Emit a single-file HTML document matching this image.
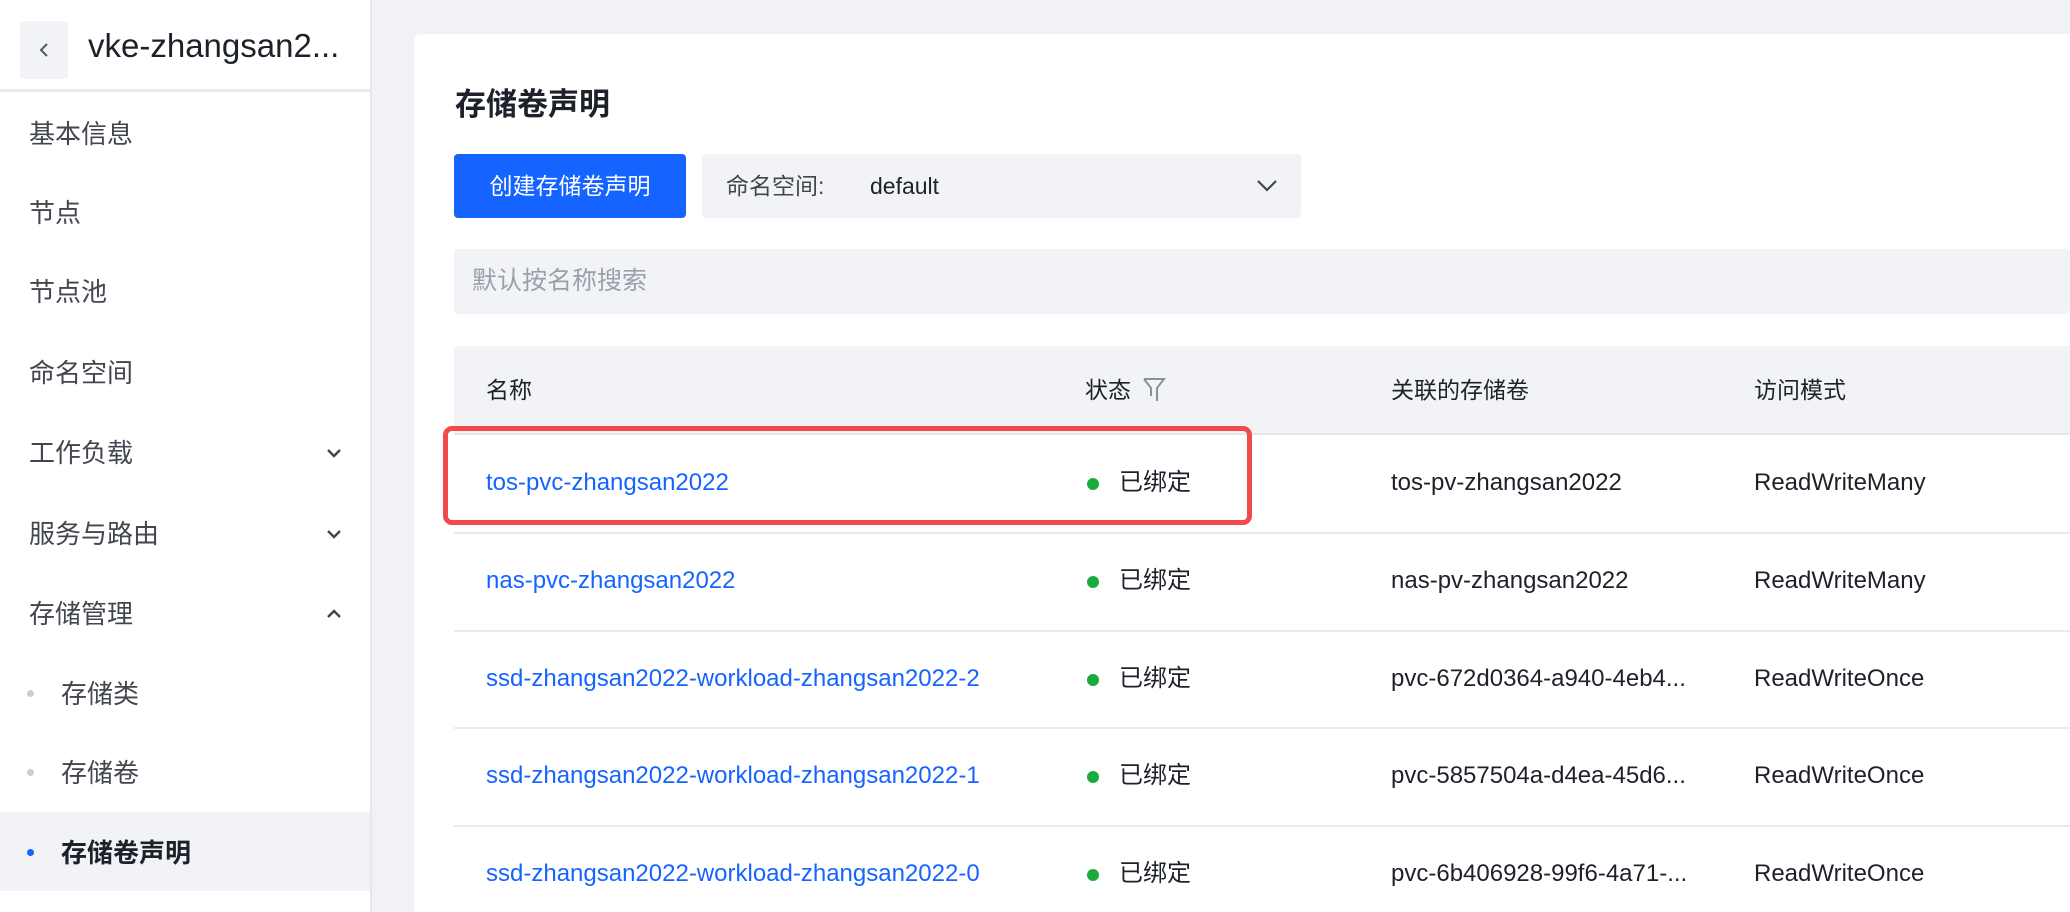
<!DOCTYPE html>
<html><head><meta charset="utf-8"><style>
*{margin:0;padding:0;box-sizing:border-box}
html,body{width:2070px;height:912px;overflow:hidden}
body{background:#f1f2f5;font-family:"Liberation Sans","Noto Sans CJK SC",sans-serif;color:#1d2129;position:relative}
.side{position:absolute;left:0;top:0;width:372px;height:912px;background:#fff;border-right:2px solid #e5e7eb}
.back{position:absolute;left:20px;top:21px;width:48px;height:58px;background:#f2f3f7;border-radius:4px}
.title{position:absolute;left:88px;top:27px;font-size:33px;color:#1d2129}
.div{position:absolute;left:0;top:89px;width:370px;height:3px;background:#e8eaef}
.mi{position:absolute;left:29px;font-size:26px;color:#42464e;line-height:30px}
.chev{position:absolute;left:326px}
.sub{left:61px}
.dot{position:absolute;left:27px;width:7px;height:7px;border-radius:50%;background:#c9cdd4}
.act{position:absolute;left:0;top:812px;width:370px;height:79px;background:#f2f3f7}
.card{position:absolute;left:414px;top:34px;width:1656px;height:878px;background:#fff;border-radius:6px 0 0 0}
.h1{position:absolute;left:455px;top:79px;font-size:31px;font-weight:bold;color:#1d2129}
.btn{position:absolute;left:454px;top:154px;width:232px;height:64px;background:#1664ff;border-radius:4px;color:#fff;font-size:23px;text-align:center;line-height:64px}
.sel{position:absolute;left:702px;top:154px;width:599px;height:64px;background:#f2f3f7;border-radius:4px}
.search{position:absolute;left:454px;top:249px;width:1616px;height:65px;background:#f2f3f7;border-radius:4px;font-size:25px;color:#9aa0aa;line-height:65px;padding-left:18px}
.th{position:absolute;left:454px;top:346px;width:1616px;height:89px;background:#f2f3f7;border-radius:4px 0 0 0;border-bottom:2px solid #e5e7eb}
.t{position:absolute;font-size:23px;line-height:28px}
.r{font-size:24px}
.row{position:absolute;left:454px;width:1616px;height:2px;background:#e8eaef}
.g{position:absolute;width:12px;height:12px;border-radius:50%;background:#1aab3c}
.lnk{color:#1664ff}
</style></head><body>
<div class="side">
<div class="back"><svg width="48" height="58"><path d="M27 23 L21 29 L27 35" stroke="#4e5969" stroke-width="2" fill="none"/></svg></div>
<div class="title">vke-zhangsan2...</div>
<div class="div"></div>
<div class="mi" style="top:119px">基本信息</div>
<div class="mi" style="top:198px">节点</div>
<div class="mi" style="top:277px">节点池</div>
<div class="mi" style="top:358px">命名空间</div>
<div class="mi" style="top:438px">工作负载</div>
<div class="mi" style="top:519px">服务与路由</div>
<div class="mi" style="top:599px">存储管理</div>
<svg class="chev" style="top:448px" width="16" height="10"><path d="M2 2 L8 8 L14 2" stroke="#42464e" stroke-width="2.4" fill="none"/></svg>
<svg class="chev" style="top:529px" width="16" height="10"><path d="M2 2 L8 8 L14 2" stroke="#42464e" stroke-width="2.4" fill="none"/></svg>
<svg class="chev" style="top:609px" width="16" height="10"><path d="M2 8 L8 2 L14 8" stroke="#42464e" stroke-width="2.4" fill="none"/></svg>
<div class="act"></div>
<div class="dot" style="top:690px"></div>
<div class="mi sub" style="top:679px">存储类</div>
<div class="dot" style="top:769px"></div>
<div class="mi sub" style="top:758px">存储卷</div>
<div class="dot" style="top:849px;background:#1664ff"></div>
<div class="mi sub" style="top:838px;font-weight:bold;color:#1d2129">存储卷声明</div>
</div>
<div class="card"></div>
<div class="h1">存储卷声明</div>
<div class="btn">创建存储卷声明</div>
<div class="sel">
<span class="t" style="left:24px;top:18px;color:#42464e">命名空间:</span>
<span class="t" style="left:168px;top:18px">default</span>
<svg style="position:absolute;left:554px;top:25px" width="22" height="14"><path d="M2 2 L11 11 L20 2" stroke="#42464e" stroke-width="2.2" fill="none"/></svg>
</div>
<div class="search">默认按名称搜索</div>
<div class="th"></div>
<div class="t" style="left:486px;top:376px">名称</div>
<div class="t" style="left:1085px;top:376px">状态</div>
<svg style="position:absolute;left:1142px;top:376px" width="24" height="28"><path d="M2 3 H22 L15 12 V25 M2 3 L9 12 V20" stroke="#8a919c" stroke-width="2" fill="none"/></svg>
<div class="t" style="left:1391px;top:376px">关联的存储卷</div>
<div class="t" style="left:1754px;top:376px">访问模式</div>

<div class="t r lnk" style="left:486px;top:469px">tos-pvc-zhangsan2022</div>
<div class="g" style="left:1087px;top:478px"></div><div class="t r" style="left:1119px;top:469px">已绑定</div>
<div class="t r" style="left:1391px;top:469px">tos-pv-zhangsan2022</div>
<div class="t r" style="left:1754px;top:469px">ReadWriteMany</div>
<div class="row" style="top:532px"></div>

<div class="t r lnk" style="left:486px;top:567px">nas-pvc-zhangsan2022</div>
<div class="g" style="left:1087px;top:576px"></div><div class="t r" style="left:1119px;top:567px">已绑定</div>
<div class="t r" style="left:1391px;top:567px">nas-pv-zhangsan2022</div>
<div class="t r" style="left:1754px;top:567px">ReadWriteMany</div>
<div class="row" style="top:630px"></div>

<div class="t r lnk" style="left:486px;top:665px">ssd-zhangsan2022-workload-zhangsan2022-2</div>
<div class="g" style="left:1087px;top:674px"></div><div class="t r" style="left:1119px;top:665px">已绑定</div>
<div class="t r" style="left:1391px;top:665px">pvc-672d0364-a940-4eb4...</div>
<div class="t r" style="left:1754px;top:665px">ReadWriteOnce</div>
<div class="row" style="top:727px"></div>

<div class="t r lnk" style="left:486px;top:762px">ssd-zhangsan2022-workload-zhangsan2022-1</div>
<div class="g" style="left:1087px;top:771px"></div><div class="t r" style="left:1119px;top:762px">已绑定</div>
<div class="t r" style="left:1391px;top:762px">pvc-5857504a-d4ea-45d6...</div>
<div class="t r" style="left:1754px;top:762px">ReadWriteOnce</div>
<div class="row" style="top:825px"></div>

<div class="t r lnk" style="left:486px;top:860px">ssd-zhangsan2022-workload-zhangsan2022-0</div>
<div class="g" style="left:1087px;top:869px"></div><div class="t r" style="left:1119px;top:860px">已绑定</div>
<div class="t r" style="left:1391px;top:860px">pvc-6b406928-99f6-4a71-...</div>
<div class="t r" style="left:1754px;top:860px">ReadWriteOnce</div>

<div style="position:absolute;left:443px;top:426px;width:809px;height:99px;border:5px solid #f24a4a;border-radius:9px"></div>
</body></html>
